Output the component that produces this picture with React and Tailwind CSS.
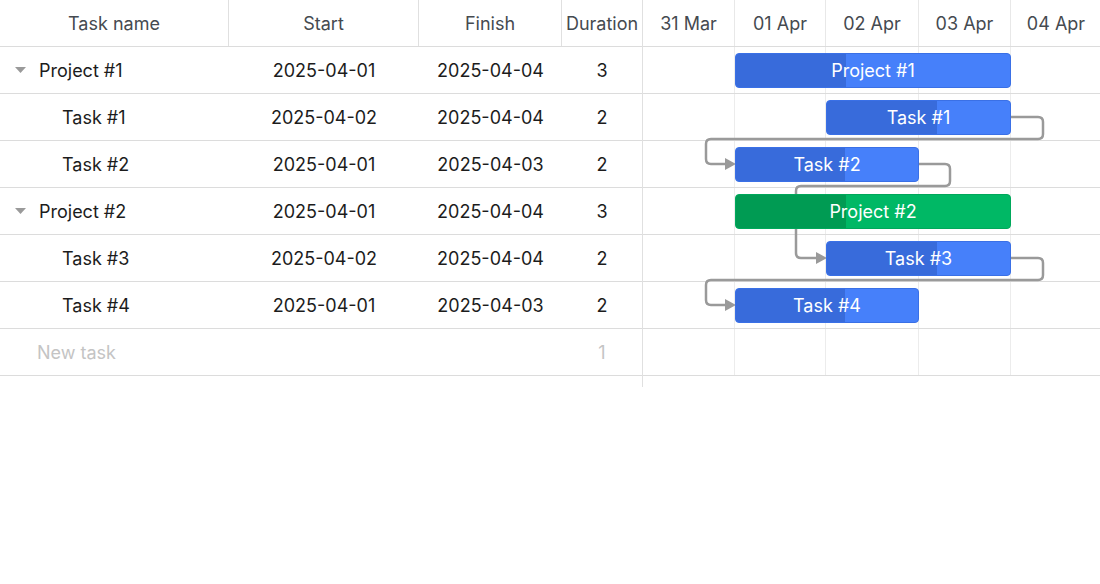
import React from 'react';

const rows = [
  { name: 'Project #1', start: '2025-04-01', end: '2025-04-04', dur: 3, project: true, left: 92, width: 276, progress: 40 },
  { name: 'Task #1', start: '2025-04-02', end: '2025-04-04', dur: 2, left: 183, width: 185, progress: 60 },
  { name: 'Task #2', start: '2025-04-01', end: '2025-04-03', dur: 2, left: 92, width: 184, progress: 60 },
  { name: 'Project #2', start: '2025-04-01', end: '2025-04-04', dur: 3, project: true, green: true, left: 92, width: 276, progress: 40 },
  { name: 'Task #3', start: '2025-04-02', end: '2025-04-04', dur: 2, left: 183, width: 185, progress: 60 },
  { name: 'Task #4', start: '2025-04-01', end: '2025-04-03', dur: 2, left: 92, width: 184, progress: 60 },
];

const days = ['31 Mar', '01 Apr', '02 Apr', '03 Apr', '04 Apr'];
const dayCols = 'grid grid-cols-[92px_91px_93px_92px_90px]';
const leftCols = 'grid grid-cols-[229px_190px_143px_80px]';

// dependency links, timeline coordinates
const links = [
  'M368 117 H395 Q400 117 400 122 V134 Q400 139 395 139 H68 Q63 139 63 144 V159 Q63 164 68 164 H83',
  'M276 164 H302 Q307 164 307 169 V181 Q307 186 302 186 H158 Q153 186 153 191 V253 Q153 258 158 258 H174',
  'M368 258 H395 Q400 258 400 263 V275 Q400 280 395 280 H68 Q63 280 63 285 V300 Q63 305 68 305 H83',
];
const arrows = [
  [93, 164],
  [184, 258],
  [93, 305],
];

function Bar({ row }) {
  const dark = row.green ? 'bg-[#009b53]' : 'bg-[#386bdb]';
  const light = row.green ? 'bg-[#00b865] border-[#00a85b]' : 'bg-[#4680fa] border-[#3a70e6]';
  return (
    <div
      className={`absolute top-[6px] h-[35px] rounded-[4px] border overflow-hidden ${light}`}
      style={{ left: row.left, width: row.width }}
    >
      <div className={`absolute inset-y-0 left-0 ${dark}`} style={{ width: `${row.progress}%` }} />
      <div className="relative h-full flex items-center justify-center text-white text-[18px]">{row.name}</div>
    </div>
  );
}

export default function App() {
  return (
    <div className="flex bg-white w-[1100px] h-[584px] font-['Inter',sans-serif] text-[18px]">
      <div className="w-[643px] h-[387px] border-r border-[#e0e0e0] shrink-0">
        <div className={`${leftCols} h-[47px] border-b border-[#dcdcdc] text-[#454a50]`}>
          <div className="flex items-center justify-center border-r border-[#e0e0e0]">Task name</div>
          <div className="flex items-center justify-center border-r border-[#e0e0e0]">Start</div>
          <div className="flex items-center justify-center border-r border-[#e0e0e0]">Finish</div>
          <div className="flex items-center justify-center">Duration</div>
        </div>
        {rows.map((r) => (
          <div key={r.name} className={`${leftCols} h-[47px] border-b border-[#dcdcdc] text-[#1c1c1c]`}>
            <div className={`flex items-center ${r.project ? 'pl-[15px]' : 'pl-[62px]'}`}>
              {r.project && (
                <svg width="11" height="6" viewBox="0 0 11 6" className="mr-[13px]">
                  <path d="M0 0 H11 L5.5 6 Z" fill="#9a9a9a" />
                </svg>
              )}
              {r.name}
            </div>
            <div className="flex items-center justify-center">{r.start}</div>
            <div className="flex items-center justify-center">{r.end}</div>
            <div className="flex items-center justify-center">{r.dur}</div>
          </div>
        ))}
        <div className={`${leftCols} h-[47px] border-b border-[#dcdcdc] text-[#c4c4c4]`}>
          <div className="flex items-center pl-[37px]">New task</div>
          <div />
          <div />
          <div className="flex items-center justify-center">1</div>
        </div>
      </div>

      <div className="relative w-[457px]">
        <div className={`${dayCols} h-[47px] border-b border-[#dcdcdc] text-[#454a50]`}>
          {days.map((d, i) => (
            <div key={d} className={`flex items-center justify-center ${i < 4 ? 'border-r border-[#e8e8e8]' : ''}`}>
              {d}
            </div>
          ))}
        </div>
        {[...rows, null].map((r, idx) => (
          <div key={idx} className={`${dayCols} h-[47px] border-b border-[#dcdcdc]`}>
            {days.map((d, i) => (
              <div key={d} className={i < 4 ? 'border-r border-[#ececec]' : ''} />
            ))}
          </div>
        ))}

        <svg className="absolute inset-0 pointer-events-none" width="457" height="387">
          {links.map((d, i) => (
            <path key={i} d={d} fill="none" stroke="#9a9a9a" strokeWidth="2.5" />
          ))}
          {arrows.map(([x, y], i) => (
            <path key={i} d={`M${x - 11} ${y - 6} L${x} ${y} L${x - 11} ${y + 6} Z`} fill="#9a9a9a" />
          ))}
        </svg>

        <div className="absolute inset-x-0 top-[47px]">
          {rows.map((r) => (
            <div key={r.name} className="relative h-[47px]">
              <Bar row={r} />
            </div>
          ))}
        </div>
      </div>
    </div>
  );
}
